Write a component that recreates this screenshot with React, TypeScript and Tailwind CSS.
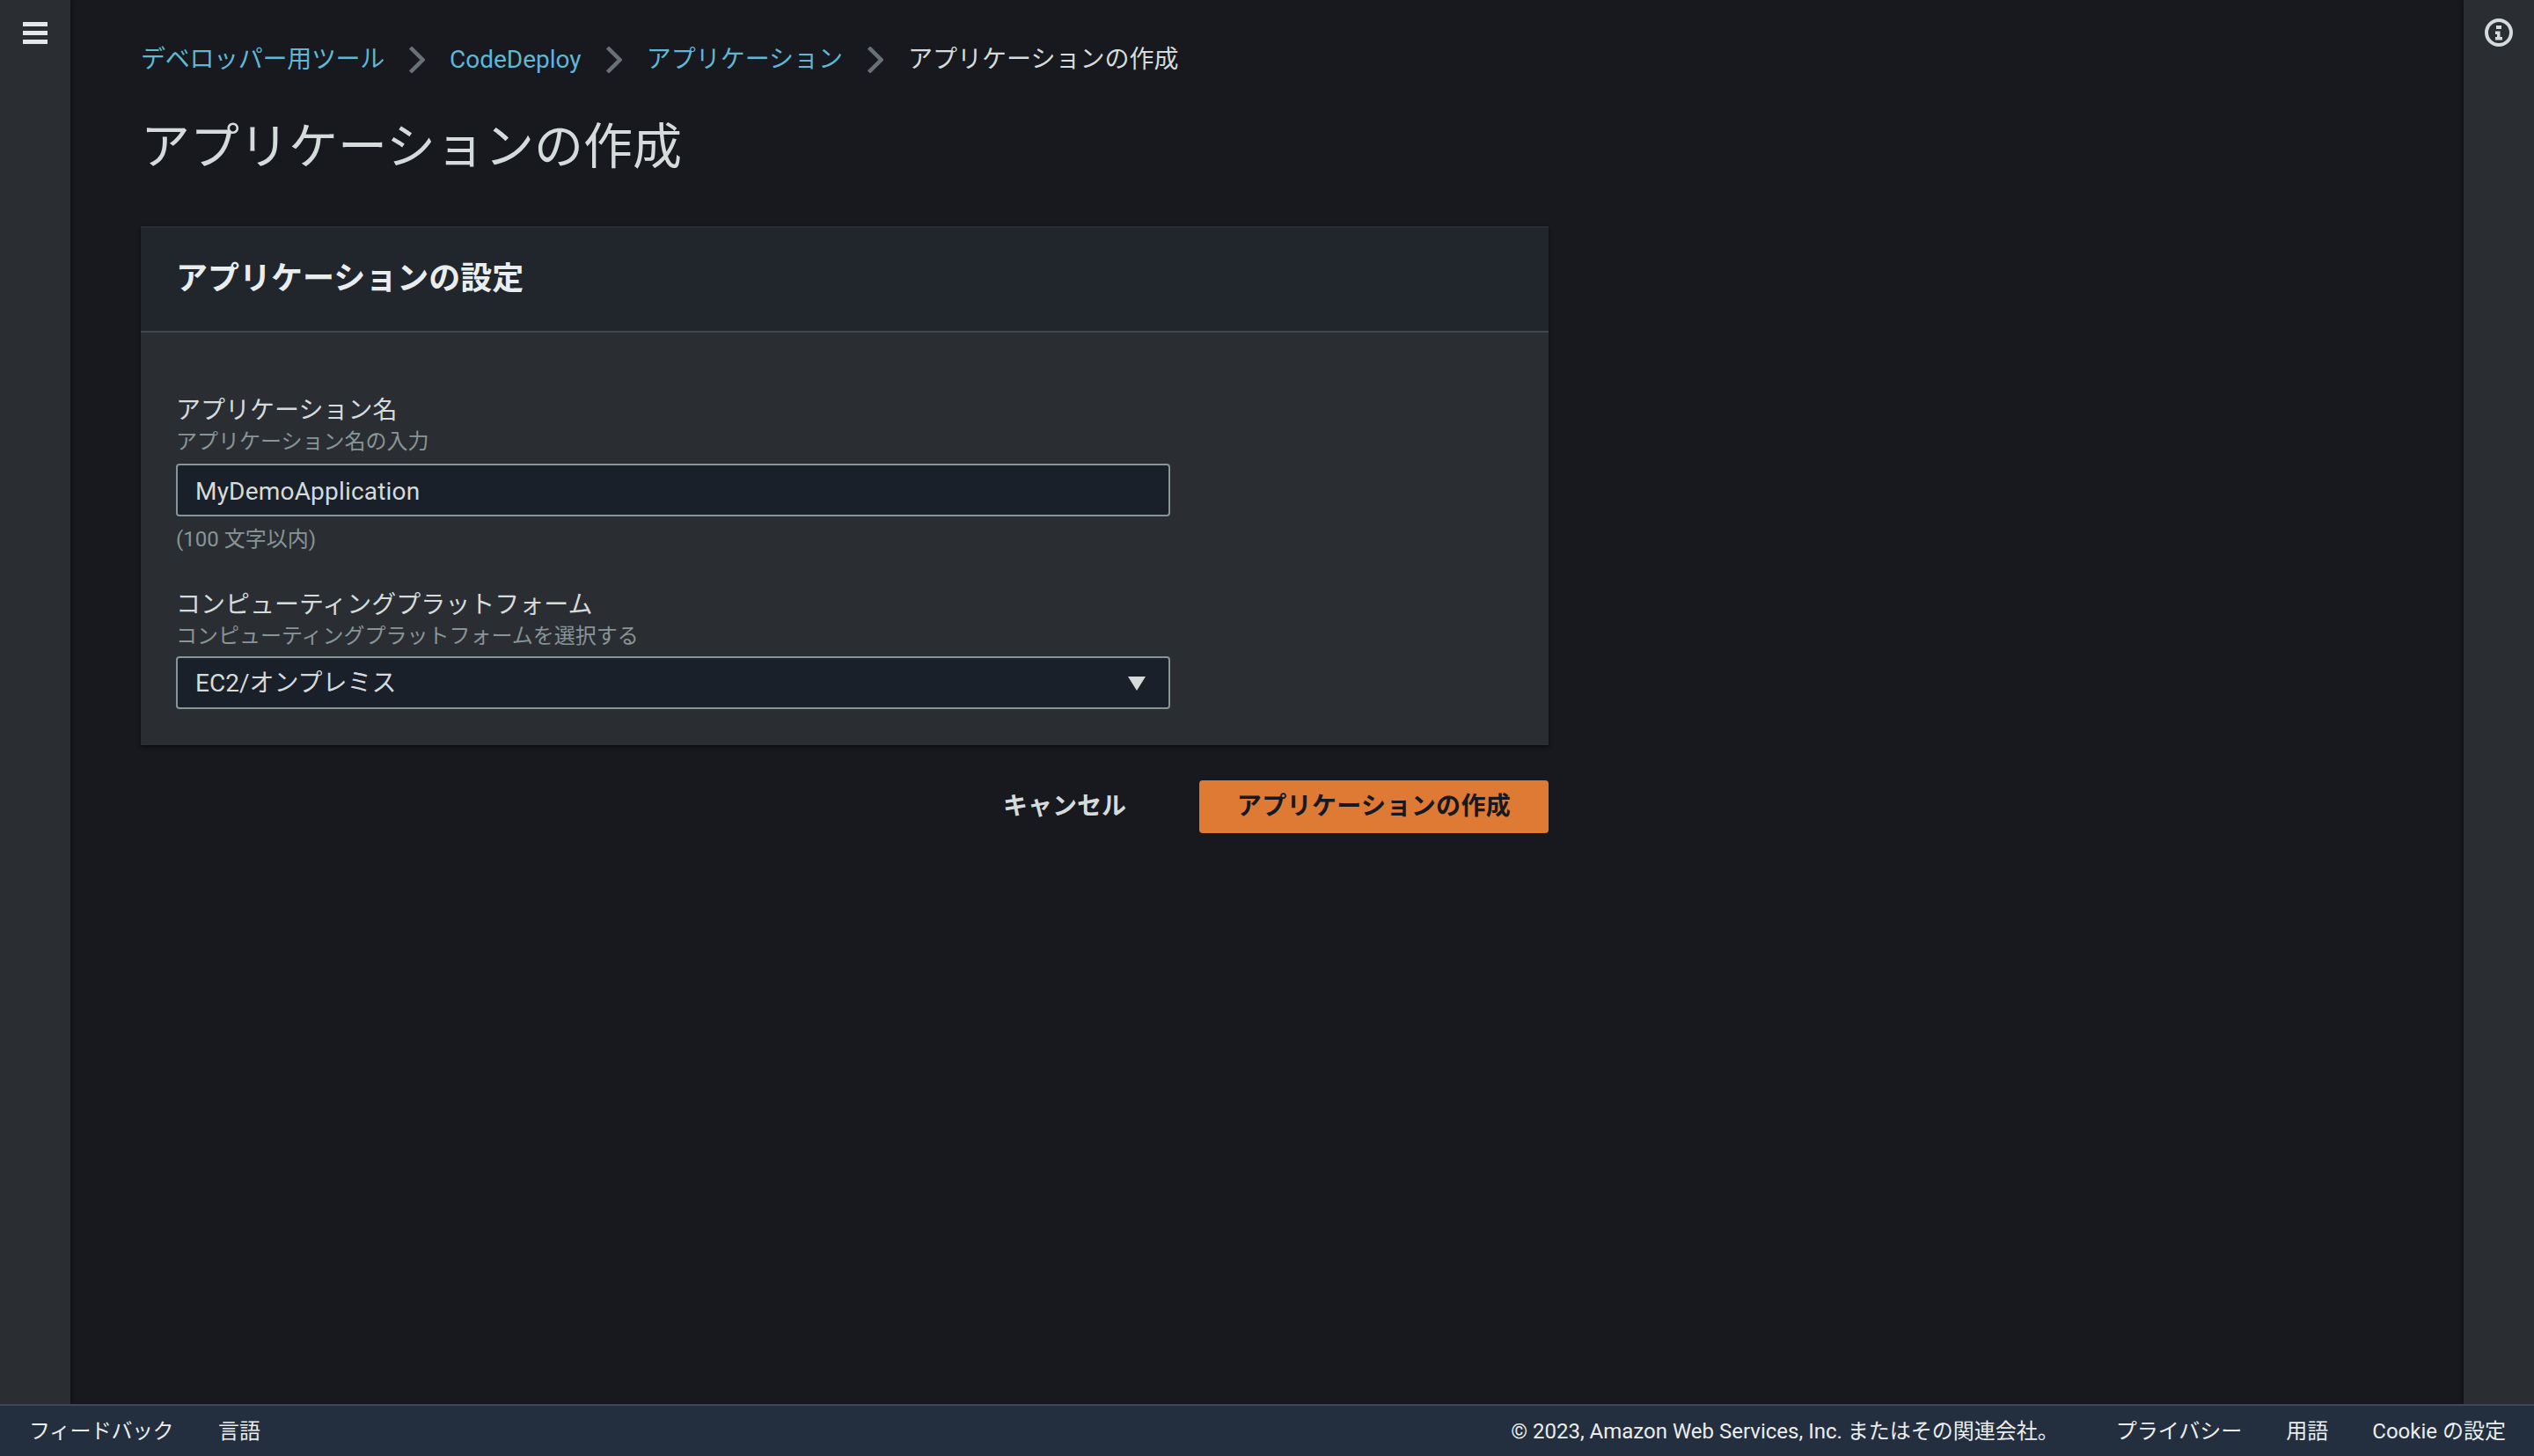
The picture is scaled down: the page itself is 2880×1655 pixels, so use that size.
function Chevron() {
  return (
    <svg width="18" height="30" viewBox="0 0 18 30" className="shrink-0" fill="none">
      <path d="M1.5 1 L15.5 15 L1.5 29" stroke="#687078" strokeWidth="4.5" />
    </svg>
  );
}

function Field({ label, sub, children, gapClass }: { label: string; sub: string; children: React.ReactNode; gapClass: string }) {
  return (
    <div className="flex flex-col">
      <div className="text-[28px] leading-[40px] text-[#d5dbdb]">{label}</div>
      <div className={`text-[24px] leading-[32px] text-[#879596] -mt-[1px] ${gapClass}`}>{sub}</div>
      {children}
    </div>
  );
}

export default function App() {
  return (
    <div className="h-[1655px] w-[2880px] flex flex-col overflow-hidden bg-[#17191e] font-['Roboto','Noto_Sans_CJK_JP','Noto_Sans',sans-serif]">
      <div className="flex-1 flex min-h-0">
        <aside className="w-[80px] shrink-0 bg-[#2a2e33] pt-[25px] pl-[26px] shadow-[2px_0_4px_rgba(0,0,0,0.35)]">
          <div className="w-[28px] flex flex-col gap-[5px]">
            <div className="h-[5px] bg-[#e4e8e8]" />
            <div className="h-[5px] bg-[#e4e8e8]" />
            <div className="h-[5px] bg-[#e4e8e8]" />
          </div>
        </aside>
        <main className="flex-1 pl-[80px] pt-[48px]">
          <nav className="flex items-center gap-[28px] h-[40px] text-[28px] leading-[40px] text-[#5fb7d4]">
            <span className="tracking-[-0.3px]">デベロッパー用ツール</span>
            <Chevron />
            <span>CodeDeploy</span>
            <Chevron />
            <span>アプリケーション</span>
            <Chevron />
            <span className="text-[#d5dbdb]">アプリケーションの作成</span>
          </nav>
          <h1 className="mt-[33px] text-[56px] leading-[92px] font-normal text-[#d5dbdb]">アプリケーションの作成</h1>
          <div className="mt-[44px] w-[1600px]">
            <section className="shadow-[0_2px_4px_rgba(0,0,0,0.5)]">
              <div className="h-[119px] bg-[#21252c] border-t-2 border-[#2a2e33] pl-[40px] pb-[2px] flex items-center text-[36px] font-bold text-[#eaeded]">
                アプリケーションの設定
              </div>
              <div className="bg-[#2a2e33] border-t-2 border-[#414750] px-[40px] pt-[69px] pb-[41px]">
                <Field label="アプリケーション名" sub="アプリケーション名の入力" gapClass="mb-[9px]">
                  <input
                    readOnly
                    value="MyDemoApplication"
                    className="w-[1130px] h-[60px] rounded-[4px] border-2 border-[#879596] bg-[#1a2029] px-[20px] pt-[2px] text-[28px] tracking-[0.2px] text-[#d5dbdb] outline-none font-['Roboto','Noto_Sans_CJK_JP',sans-serif]"
                  />
                </Field>
                <div className="text-[24px] leading-[32px] text-[#879596] mt-[10px] mb-[39px]">(100 文字以内)</div>
                <Field label="コンピューティングプラットフォーム" sub="コンピューティングプラットフォームを選択する" gapClass="mb-[7px]">
                  <div className="w-[1130px] h-[60px] rounded-[4px] border-2 border-[#879596] bg-[#1a2029] pl-[20px] pr-[26px] pt-[2px] flex items-center justify-between text-[28px] text-[#d5dbdb]">
                    <span>EC2/オンプレミス</span>
                    <svg width="20" height="16" viewBox="0 0 20 16">
                      <path d="M0 0 H20 L10 16 Z" fill="#d5dbdb" />
                    </svg>
                  </div>
                </Field>
              </div>
            </section>
            <div className="mt-[40px] flex justify-end items-center">
              <span className="text-[28px] font-bold text-[#d5dbdb] mr-[83px]">キャンセル</span>
              <div className="h-[60px] w-[397px] rounded-[4px] bg-[#de7a33] flex items-center justify-center text-[28px] font-bold tracking-[0.35px] text-[#16191f]">
                アプリケーションの作成
              </div>
            </div>
          </div>
        </main>
        <aside className="w-[80px] shrink-0 bg-[#2a2e33] pt-[21px] pl-[24px] shadow-[-2px_0_4px_rgba(0,0,0,0.35)]">
          <svg width="32" height="32" viewBox="0 0 32 32" fill="none">
            <circle cx="16" cy="16" r="14" stroke="#d5dbdb" strokeWidth="4" />
            <rect x="13" y="8" width="6" height="4" fill="#d5dbdb" />
            <path d="M12 14.5 H17.5 V21 H20 V24.5 H12 V21 H14 V18 H12 Z" fill="#d5dbdb" />
          </svg>
        </aside>
      </div>
      <footer className="h-[59px] shrink-0 bg-[#232f3e] border-t-2 border-[#414750] pl-[33px] pr-[32px] flex items-center justify-between text-[24px] text-[#eaeded]">
        <div className="flex gap-[51px]">
          <span className="tracking-[-0.5px]">フィードバック</span>
          <span>言語</span>
        </div>
        <div className="flex gap-[50px]">
          <span className="mr-[15px]">© 2023, Amazon Web Services, Inc. またはその関連会社。</span>
          <span>プライバシー</span>
          <span>用語</span>
          <span>Cookie の設定</span>
        </div>
      </footer>
    </div>
  );
}
